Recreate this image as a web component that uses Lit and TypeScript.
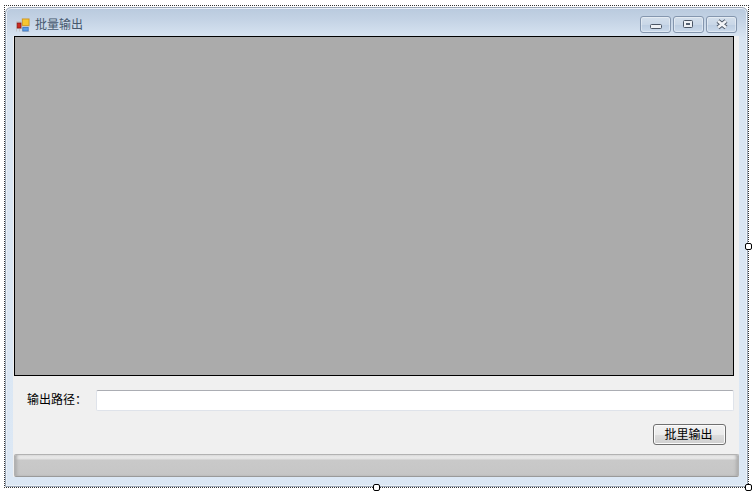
import { LitElement, html, css } from "lit";
import { customElement } from "lit/decorators.js";

@customElement("app-root")
export class AppRoot extends LitElement {
  static styles = css`
    :host {
      display: block;
      width: 754px;
      height: 491px;
      background: #fff;
      font-family: "Noto Sans CJK SC", "Liberation Sans", sans-serif;
      font-size: 12px;
      color: #000;
      overflow: hidden;
    }
    .stage {
      position: relative;
      width: 754px;
      height: 491px;
      box-sizing: border-box;
      padding: 5px 5px 3px 4px;
    }
    .select {
      height: 100%;
      box-sizing: border-box;
      border: 1px dotted #333;
      padding: 1px 0 0 0;
    }
    .window {
      height: 100%;
      box-sizing: border-box;
      border: 1px solid #9aa6b6;
      border-radius: 6px 6px 0 0;
      background: linear-gradient(180deg, #b9cade 0, #c4d3e5 12px, #d9e5f2 30px, #dce8f5 100%);
      display: flex;
      flex-direction: column;
      padding: 0 7px 9px 7px;
      box-shadow: inset 0 0 0 1px #eaf1f8;
    }
    .title {
      height: 28px;
      flex: none;
      display: flex;
      align-items: center;
      padding: 5px 0 0 3px;
      box-sizing: border-box;
    }
    .app-icon {
      width: 14px;
      height: 14px;
      flex: none;
      display: block;
    }
    .title-text {
      margin-left: 5px;
      padding-bottom: 2px;
      font-size: 12px;
      color: #46586e;
      line-height: 14px;
    }
    .caption {
      margin-left: auto;
      display: flex;
      gap: 2px;
      margin-right: 3px;
    }
    .cap {
      width: 31px;
      height: 17px;
      box-sizing: border-box;
      border: 1px solid #8496ae;
      border-radius: 3px;
      background: linear-gradient(180deg, #d4dfec 0, #c9d7e7 50%, #bccde1 52%, #cbdaeb 100%);
      box-shadow: inset 0 0 0 1px rgba(255, 255, 255, 0.4);
      padding: 0;
      display: block;
    }
    .cap svg {
      display: block;
      width: 29px;
      height: 15px;
    }
    .client {
      flex: 1;
      min-height: 0;
      background: #f0f0f0;
      display: flex;
      flex-direction: column;
      padding: 0 0 0 1px;
      margin-right: 1px;
    }
    .picture {
      height: 340px;
      flex: none;
      box-sizing: border-box;
      background: #ababab;
      border: 1px solid #000;
      margin-right: 5px;
    }
    .path-row {
      display: flex;
      align-items: center;
      margin-top: 14px;
      height: 21px;
      flex: none;
      margin-right: 5px;
    }
    .label {
      width: 82px;
      flex: none;
      box-sizing: border-box;
      padding: 0 0 4px 13px;
      font-size: 12px;
      line-height: 14px;
      white-space: nowrap;
    }
    .input {
      flex: 1;
      height: 21px;
      box-sizing: border-box;
      background: #fff;
      border: 1px solid #dfe3ea;
      border-top-color: #abadb3;
      border-radius: 2px;
      padding: 0;
      margin: 0;
      outline: none;
    }
    .btn-row {
      display: flex;
      justify-content: flex-end;
      margin-top: 13px;
      flex: none;
      margin-right: 13px;
    }
    .btn {
      width: 73px;
      height: 21px;
      box-sizing: border-box;
      border: 1px solid #707070;
      border-radius: 3px;
      background: linear-gradient(180deg, #f2f2f2 0, #ebebeb 50%, #dddddd 52%, #cfcfcf 100%);
      box-shadow: inset 0 0 0 1px #fbfbfb;
      font: inherit;
      font-size: 12px;
      line-height: 14px;
      padding: 0 2px 2px 0;
      color: #000;
    }
    .progress {
      margin-top: 9px;
      height: 23px;
      flex: none;
      box-sizing: border-box;
      border: 1px solid #b2b2b2;
      border-bottom-color: #9a9a9a;
      border-radius: 2px;
      background: linear-gradient(180deg, #efefef 0, #e2e2e2 4px, #c9c9c9 5px, #c6c6c6 100%);
      box-shadow: inset 3px 0 3px -1px #aeaeae, inset -3px 0 3px -1px #aeaeae;
    }
    .handle {
      position: absolute;
      width: 7px;
      height: 7px;
      box-sizing: border-box;
      border: 1px solid #000;
      border-radius: 2px;
      background: #fff;
    }
    .h-right { left: 745px; top: 243px; }
    .h-bottom { left: 373px; top: 484px; }
    .h-corner { left: 745px; top: 484px; }
  `;

  render() {
    return html`
      <div class="stage">
        <div class="select">
          <div class="window">
            <div class="title">
              <svg class="app-icon" viewBox="0 0 14 14">
                <path d="M0.5 13.5 V3.5 H6 M0.5 10.5 H6 M3.5 10.5 V13.5 M6.5 10 V13.5 H13.5" fill="none" stroke="#c4c6c9" />
                <path d="M5.5 0.5 H13.5 V8.5 H5.5 Z" fill="#d8dce1" stroke="#c4c6c9" />
                <rect x="6.5" y="1" width="6.5" height="6.5" fill="#f6c531" stroke="#cf9418" stroke-width="0.8" />
                <rect x="1.2" y="5" width="3.8" height="5" fill="#cc2a22" stroke="#8e1712" stroke-width="0.8" />
                <rect x="6.8" y="9.4" width="5.4" height="3.6" fill="#5c9de6" stroke="#3a74bf" stroke-width="0.8" />
              </svg>
              <span class="title-text">批量输出</span>
              <div class="caption">
                <button class="cap" aria-label="minimize">
                  <svg viewBox="0 0 29 15">
                    <rect x="9.5" y="7.5" width="11" height="4" rx="1" fill="#eef1f5" stroke="#4a5564" />
                  </svg>
                </button>
                <button class="cap" aria-label="restore">
                  <svg viewBox="0 0 29 15">
                    <rect x="9.5" y="3.5" width="9" height="7" rx="1" fill="#eef1f5" stroke="#4a5564" />
                    <rect x="12" y="6" width="4" height="2" fill="#54606f" />
                  </svg>
                </button>
                <button class="cap" aria-label="close">
                  <svg viewBox="0 0 29 15">
                    <path d="M11 4 L19 10.5 M19 4 L11 10.5" stroke="#4a5564" stroke-width="4.6" fill="none" />
                    <path d="M11 4 L19 10.5 M19 4 L11 10.5" stroke="#f2f4f7" stroke-width="2.8" fill="none" />
                  </svg>
                </button>
              </div>
            </div>
            <div class="client">
              <div class="picture"></div>
              <div class="path-row">
                <span class="label">输出路径：</span>
                <input class="input" />
              </div>
              <div class="btn-row"><button class="btn">批里输出</button></div>
              <div class="progress"></div>
            </div>
          </div>
        </div>
        <div class="handle h-right"></div>
        <div class="handle h-bottom"></div>
        <div class="handle h-corner"></div>
      </div>
    `;
  }
}
